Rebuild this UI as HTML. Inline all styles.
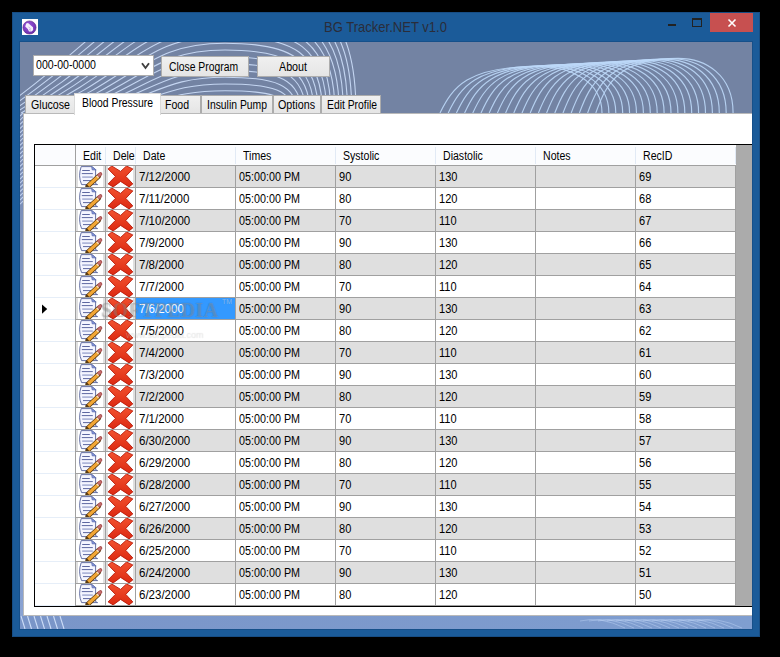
<!DOCTYPE html>
<html><head><meta charset="utf-8"><style>
html,body{margin:0;padding:0;}
body{width:780px;height:657px;background:#000;position:relative;overflow:hidden;font-family:"Liberation Sans",sans-serif;}
div{position:absolute;box-sizing:content-box;}
.t{white-space:nowrap;line-height:normal;}
</style></head><body>
<div style="left:12px;top:12px;width:746px;height:623px;background:#1b5b99;border:1px solid #174d84"></div>
<div style="left:22px;top:19px;width:16px;height:16px;background:#fff"></div>
<svg style="position:absolute;left:22px;top:19px" width="16" height="16" viewBox="0 0 16 16">
<defs><radialGradient id="ic" cx="0.4" cy="0.35" r="0.7"><stop offset="0" stop-color="#9a5ae0"/><stop offset="1" stop-color="#6a2aa8"/></radialGradient></defs>
<circle cx="7.5" cy="8.5" r="6.6" fill="url(#ic)" stroke="#5a2a8a" stroke-width="0.6"/>
<path d="M4.2 4.6 L6 4 L11 8.2 L11.2 11 L9.6 12.6 L7 12.4 L5.8 10 L3.2 7.4 Z" fill="#f4eefc"/>
<path d="M6.5 8 L8.5 9.5 M7 10.5 L9 11.2" stroke="#b090d8" stroke-width="0.7"/>
</svg>
<div class="t" style="left:324px;top:18px;font-size:15px;color:#2a2d3a;transform:scaleX(0.8695);transform-origin:0 0;">BG Tracker.NET v1.0</div>
<div style="left:668px;top:24px;width:8px;height:2px;background:#222"></div>
<div style="left:692px;top:18px;width:8px;height:6px;border:1px solid #222;border-top-width:2px"></div>
<div style="left:710px;top:13px;width:43px;height:19px;background:#c75050"></div>
<svg style="position:absolute;left:710px;top:13px" width="43" height="19" viewBox="0 0 43 19">
<path d="M18.5 6.5 L25.5 13.5 M25.5 6.5 L18.5 13.5" stroke="#fff" stroke-width="1.6" fill="none"/>
</svg>
<div style="left:19px;top:41px;width:734px;height:589px;background:#16508a"></div>
<div style="left:20px;top:42px;width:732px;height:587px;background:#7383a3"></div>
<svg style="position:absolute;left:20px;top:42px" width="732" height="587" viewBox="0 0 732 587">
<defs><linearGradient id="bs" x1="0" x2="1" y1="0" y2="0"><stop offset="0" stop-color="#7a95c8"/><stop offset="1" stop-color="#7f9ed0"/></linearGradient></defs>
<linearGradient id="ls" x1="0" x2="0" y1="0" y2="1"><stop offset="0" stop-color="#7686aa"/><stop offset="0.35" stop-color="#8298c6"/><stop offset="1" stop-color="#89a2d2"/></linearGradient>
<rect x="0" y="71" width="3" height="504" fill="url(#ls)"/>
<path d="M0 74.0 L3 71.0" stroke="#cfe0fb" stroke-width="1.1" stroke-opacity="0.8"/>
<path d="M0 78.2 L3 75.2" stroke="#cfe0fb" stroke-width="1.1" stroke-opacity="0.8"/>
<path d="M0 82.4 L3 79.4" stroke="#cfe0fb" stroke-width="1.1" stroke-opacity="0.8"/>
<path d="M0 86.6 L3 83.6" stroke="#cfe0fb" stroke-width="1.1" stroke-opacity="0.8"/>
<path d="M0 90.8 L3 87.8" stroke="#cfe0fb" stroke-width="1.1" stroke-opacity="0.8"/>
<path d="M0 95.0 L3 92.0" stroke="#cfe0fb" stroke-width="1.1" stroke-opacity="0.8"/>
<path d="M0 99.2 L3 96.2" stroke="#cfe0fb" stroke-width="1.1" stroke-opacity="0.8"/>
<path d="M0 103.4 L3 100.4" stroke="#cfe0fb" stroke-width="1.1" stroke-opacity="0.8"/>
<path d="M0 107.6 L3 104.6" stroke="#cfe0fb" stroke-width="1.1" stroke-opacity="0.8"/>
<path d="M0 111.8 L3 108.8" stroke="#cfe0fb" stroke-width="1.1" stroke-opacity="0.8"/>
<path d="M0 116.0 L3 113.0" stroke="#cfe0fb" stroke-width="1.1" stroke-opacity="0.8"/>
<path d="M0 120.2 L3 117.2" stroke="#cfe0fb" stroke-width="1.1" stroke-opacity="0.8"/>
<path d="M0 124.4 L3 121.4" stroke="#cfe0fb" stroke-width="1.1" stroke-opacity="0.8"/>
<path d="M0 128.6 L3 125.6" stroke="#cfe0fb" stroke-width="1.1" stroke-opacity="0.8"/>
<path d="M0 132.8 L3 129.8" stroke="#cfe0fb" stroke-width="1.1" stroke-opacity="0.8"/>
<path d="M0 137.0 L3 134.0" stroke="#cfe0fb" stroke-width="1.1" stroke-opacity="0.8"/>
<path d="M0 141.2 L3 138.2" stroke="#cfe0fb" stroke-width="1.1" stroke-opacity="0.8"/>
<path d="M0 145.4 L3 142.4" stroke="#cfe0fb" stroke-width="1.1" stroke-opacity="0.8"/>
<path d="M0 149.6 L3 146.6" stroke="#cfe0fb" stroke-width="1.1" stroke-opacity="0.8"/>
<path d="M0 153.8 L3 150.8" stroke="#cfe0fb" stroke-width="1.1" stroke-opacity="0.8"/>
<path d="M0 158.0 L3 155.0" stroke="#cfe0fb" stroke-width="1.1" stroke-opacity="0.8"/>
<path d="M0 162.2 L3 159.2" stroke="#cfe0fb" stroke-width="1.1" stroke-opacity="0.8"/>
<rect x="0" y="574" width="732" height="13" fill="url(#bs)"/>
<path d="M1.0 574 L5.0 587" stroke="#dbe9ff" stroke-width="1.1" stroke-opacity="0.85"/>
<path d="M7.5 574 L11.5 587" stroke="#dbe9ff" stroke-width="1.1" stroke-opacity="0.85"/>
<path d="M14.0 574 L18.0 587" stroke="#dbe9ff" stroke-width="1.1" stroke-opacity="0.85"/>
<path d="M20.5 574 L24.5 587" stroke="#dbe9ff" stroke-width="1.1" stroke-opacity="0.85"/>
<path d="M27.0 574 L31.0 587" stroke="#dbe9ff" stroke-width="1.1" stroke-opacity="0.85"/>
<path d="M33.5 574 L37.5 587" stroke="#dbe9ff" stroke-width="1.1" stroke-opacity="0.85"/>
<path d="M40.0 574 L44.0 587" stroke="#dbe9ff" stroke-width="1.1" stroke-opacity="0.85"/>
<path d="M560 579 Q580 574 605 586" fill="none" stroke="#c8dcfa" stroke-width="0.9" stroke-opacity="0.45"/>
<path d="M569 579 Q589 574 614 586" fill="none" stroke="#c8dcfa" stroke-width="0.9" stroke-opacity="0.45"/>
<path d="M578 579 Q598 574 623 586" fill="none" stroke="#c8dcfa" stroke-width="0.9" stroke-opacity="0.45"/>
<path d="M587 579 Q607 574 632 586" fill="none" stroke="#c8dcfa" stroke-width="0.9" stroke-opacity="0.45"/>
<path d="M596 579 Q616 574 641 586" fill="none" stroke="#c8dcfa" stroke-width="0.9" stroke-opacity="0.45"/>
<path d="M605 579 Q625 574 650 586" fill="none" stroke="#c8dcfa" stroke-width="0.9" stroke-opacity="0.45"/>
<path d="M614 579 Q634 574 659 586" fill="none" stroke="#c8dcfa" stroke-width="0.9" stroke-opacity="0.45"/>
<path d="M623 579 Q643 574 668 586" fill="none" stroke="#c8dcfa" stroke-width="0.9" stroke-opacity="0.45"/>
<path d="M632 579 Q652 574 677 586" fill="none" stroke="#c8dcfa" stroke-width="0.9" stroke-opacity="0.45"/>
<path d="M641 579 Q661 574 686 586" fill="none" stroke="#c8dcfa" stroke-width="0.9" stroke-opacity="0.45"/>
<path d="M650 579 Q670 574 695 586" fill="none" stroke="#c8dcfa" stroke-width="0.9" stroke-opacity="0.45"/>
<path d="M659 579 Q679 574 704 586" fill="none" stroke="#c8dcfa" stroke-width="0.9" stroke-opacity="0.45"/>
<path d="M668 579 Q688 574 713 586" fill="none" stroke="#c8dcfa" stroke-width="0.9" stroke-opacity="0.45"/>
<path d="M677 579 Q697 574 722 586" fill="none" stroke="#c8dcfa" stroke-width="0.9" stroke-opacity="0.45"/>
<path d="M-24.0 71.0 C90.5 -9.1 102.0 -60.0 205.0 -60.0 C296.7 -60.0 336.0 -31.2 336.0 71.0" fill="none" stroke="#d2e4ff" stroke-opacity="0.85" stroke-width="1.1"/>
<path d="M-17.7 71.0 C93.6 -3.5 104.8 -53.2 205.0 -53.2 C293.8 -53.2 331.8 -25.9 331.8 71.0" fill="none" stroke="#d2e4ff" stroke-opacity="0.85" stroke-width="1.1"/>
<path d="M-11.4 71.0 C96.8 2.6 107.6 -46.4 205.0 -46.4 C290.8 -46.4 327.6 -20.6 327.6 71.0" fill="none" stroke="#d2e4ff" stroke-opacity="0.85" stroke-width="1.1"/>
<path d="M-5.1 71.0 C99.9 8.4 110.5 -39.6 205.0 -39.6 C287.9 -39.6 323.4 -15.3 323.4 71.0" fill="none" stroke="#d2e4ff" stroke-opacity="0.85" stroke-width="1.1"/>
<path d="M1.2 71.0 C103.1 14.0 113.3 -32.8 205.0 -32.8 C284.9 -32.8 319.2 -10.0 319.2 71.0" fill="none" stroke="#d2e4ff" stroke-opacity="0.85" stroke-width="1.1"/>
<path d="M7.5 71.0 C106.2 19.4 116.1 -26.0 205.0 -26.0 C282.0 -26.0 315.0 -4.7 315.0 71.0" fill="none" stroke="#d2e4ff" stroke-opacity="0.85" stroke-width="1.1"/>
<path d="M13.8 71.0 C109.4 24.6 119.0 -19.2 205.0 -19.2 C279.1 -19.2 310.8 0.6 310.8 71.0" fill="none" stroke="#d2e4ff" stroke-opacity="0.85" stroke-width="1.1"/>
<path d="M20.1 71.0 C112.6 29.5 121.8 -12.4 205.0 -12.4 C276.1 -12.4 306.6 5.9 306.6 71.0" fill="none" stroke="#d2e4ff" stroke-opacity="0.85" stroke-width="1.1"/>
<path d="M26.4 71.0 C115.7 34.2 124.6 -5.6 205.0 -5.6 C273.2 -5.6 302.4 11.3 302.4 71.0" fill="none" stroke="#d2e4ff" stroke-opacity="0.85" stroke-width="1.1"/>
<path d="M32.7 71.0 C118.8 38.6 127.5 1.2 205.0 1.2 C270.2 1.2 298.2 16.6 298.2 71.0" fill="none" stroke="#d2e4ff" stroke-opacity="0.85" stroke-width="1.1"/>
<path d="M39.0 71.0 C122.0 42.8 130.3 8.0 205.0 8.0 C267.3 8.0 294.0 21.9 294.0 71.0" fill="none" stroke="#d2e4ff" stroke-opacity="0.85" stroke-width="1.1"/>
<path d="M45.3 71.0 C125.1 46.8 133.1 14.8 205.0 14.8 C264.4 14.8 289.8 27.2 289.8 71.0" fill="none" stroke="#d2e4ff" stroke-opacity="0.85" stroke-width="1.1"/>
<path d="M51.6 71.0 C128.3 50.6 136.0 21.6 205.0 21.6 C261.4 21.6 285.6 32.5 285.6 71.0" fill="none" stroke="#d2e4ff" stroke-opacity="0.85" stroke-width="1.1"/>
<path d="M57.9 71.0 C131.4 54.1 138.8 28.4 205.0 28.4 C258.5 28.4 281.4 37.8 281.4 71.0" fill="none" stroke="#d2e4ff" stroke-opacity="0.85" stroke-width="1.1"/>
<path d="M64.2 71.0 C134.6 57.4 141.6 35.2 205.0 35.2 C255.5 35.2 277.2 43.1 277.2 71.0" fill="none" stroke="#d2e4ff" stroke-opacity="0.85" stroke-width="1.1"/>
<path d="M70.5 71.0 C137.8 60.5 144.5 42.0 205.0 42.0 C252.6 42.0 273.0 48.4 273.0 71.0" fill="none" stroke="#d2e4ff" stroke-opacity="0.85" stroke-width="1.1"/>
<path d="M76.8 71.0 C140.9 63.3 147.3 48.8 205.0 48.8 C249.7 48.8 268.8 53.7 268.8 71.0" fill="none" stroke="#d2e4ff" stroke-opacity="0.85" stroke-width="1.1"/>
<path d="M83.1 71.0 C144.1 65.9 150.1 55.6 205.0 55.6 C246.7 55.6 264.6 59.0 264.6 71.0" fill="none" stroke="#d2e4ff" stroke-opacity="0.85" stroke-width="1.1"/>
<path d="M420.0 71.0 C432.6 45.3 447.2 24.4 517.2 24.4 C549.6 24.4 582.0 38.4 582.0 71.0" fill="none" stroke="#bcd8f8" stroke-opacity="0.9" stroke-width="1.15"/>
<path d="M428.2 71.0 C440.7 45.1 455.2 23.9 524.6 23.9 C556.8 23.9 588.9 38.1 588.9 71.0" fill="none" stroke="#bcd8f8" stroke-opacity="0.9" stroke-width="1.15"/>
<path d="M436.4 71.0 C448.8 44.9 463.2 23.5 532.0 23.5 C563.9 23.5 595.8 37.8 595.8 71.0" fill="none" stroke="#bcd8f8" stroke-opacity="0.9" stroke-width="1.15"/>
<path d="M444.6 71.0 C456.9 44.7 471.2 23.1 539.5 23.1 C571.1 23.1 602.7 37.5 602.7 71.0" fill="none" stroke="#bcd8f8" stroke-opacity="0.9" stroke-width="1.15"/>
<path d="M452.8 71.0 C465.0 44.4 479.1 22.7 546.9 22.7 C578.2 22.7 609.6 37.2 609.6 71.0" fill="none" stroke="#bcd8f8" stroke-opacity="0.9" stroke-width="1.15"/>
<path d="M461.0 71.0 C473.1 44.2 487.1 22.3 554.3 22.3 C585.4 22.3 616.5 36.9 616.5 71.0" fill="none" stroke="#bcd8f8" stroke-opacity="0.9" stroke-width="1.15"/>
<path d="M469.2 71.0 C481.2 44.0 495.1 21.8 561.7 21.8 C592.6 21.8 623.4 36.6 623.4 71.0" fill="none" stroke="#bcd8f8" stroke-opacity="0.9" stroke-width="1.15"/>
<path d="M477.4 71.0 C489.3 43.7 503.1 21.4 569.1 21.4 C599.7 21.4 630.3 36.3 630.3 71.0" fill="none" stroke="#bcd8f8" stroke-opacity="0.9" stroke-width="1.15"/>
<path d="M485.6 71.0 C497.4 43.5 511.1 21.0 576.6 21.0 C606.9 21.0 637.2 36.0 637.2 71.0" fill="none" stroke="#bcd8f8" stroke-opacity="0.9" stroke-width="1.15"/>
<path d="M493.8 71.0 C505.5 43.3 519.1 20.6 584.0 20.6 C614.0 20.6 644.1 35.7 644.1 71.0" fill="none" stroke="#bcd8f8" stroke-opacity="0.9" stroke-width="1.15"/>
<path d="M502.0 71.0 C513.6 43.0 527.0 20.2 591.4 20.2 C621.2 20.2 651.0 35.4 651.0 71.0" fill="none" stroke="#bcd8f8" stroke-opacity="0.9" stroke-width="1.15"/>
<path d="M510.2 71.0 C521.7 42.8 535.0 19.7 598.8 19.7 C628.4 19.7 657.9 35.1 657.9 71.0" fill="none" stroke="#bcd8f8" stroke-opacity="0.9" stroke-width="1.15"/>
<path d="M518.4 71.0 C529.8 42.6 543.0 19.3 606.2 19.3 C635.5 19.3 664.8 34.8 664.8 71.0" fill="none" stroke="#bcd8f8" stroke-opacity="0.9" stroke-width="1.15"/>
<path d="M526.6 71.0 C537.9 42.3 551.0 18.9 613.7 18.9 C642.7 18.9 671.7 34.5 671.7 71.0" fill="none" stroke="#bcd8f8" stroke-opacity="0.9" stroke-width="1.15"/>
<path d="M534.8 71.0 C546.0 42.1 559.0 18.5 621.1 18.5 C649.8 18.5 678.6 34.2 678.6 71.0" fill="none" stroke="#bcd8f8" stroke-opacity="0.9" stroke-width="1.15"/>
<path d="M543.0 71.0 C554.1 41.9 566.9 18.0 628.5 18.0 C657.0 18.0 685.5 33.9 685.5 71.0" fill="none" stroke="#bcd8f8" stroke-opacity="0.9" stroke-width="1.15"/>
<path d="M551.2 71.0 C562.2 41.6 574.9 17.6 635.9 17.6 C664.2 17.6 692.4 33.6 692.4 71.0" fill="none" stroke="#bcd8f8" stroke-opacity="0.9" stroke-width="1.15"/>
<path d="M559.4 71.0 C570.3 41.4 582.9 17.2 643.3 17.2 C671.3 17.2 699.3 33.3 699.3 71.0" fill="none" stroke="#bcd8f8" stroke-opacity="0.9" stroke-width="1.15"/>
<path d="M567.6 71.0 C578.4 41.2 590.9 16.8 650.8 16.8 C678.5 16.8 706.2 33.1 706.2 71.0" fill="none" stroke="#bcd8f8" stroke-opacity="0.9" stroke-width="1.15"/>
<path d="M575.8 71.0 C586.5 41.0 598.9 16.4 658.2 16.4 C685.6 16.4 713.1 32.8 713.1 71.0" fill="none" stroke="#bcd8f8" stroke-opacity="0.9" stroke-width="1.15"/>
</svg>
<div style="left:33px;top:55px;width:119px;height:19px;background:#fff;border:1px solid #adadad"></div>
<div class="t" style="left:36px;top:58px;font-size:12px;color:#000;transform:scaleX(0.8817);transform-origin:0 0;">000-00-0000</div>
<svg style="position:absolute;left:141px;top:62px" width="9" height="8" viewBox="0 0 9 8">
<path d="M1 1.2 L4.5 6 L8 1.2" stroke="#404040" stroke-width="1.9" fill="none"/></svg>
<div style="left:161px;top:56px;width:86px;height:19px;border:1px solid #adadad;background:linear-gradient(#f0f0f0,#e5e5e5)"></div>
<div class="t" style="left:169px;top:60px;font-size:12px;color:#000;transform:scaleX(0.8622);transform-origin:0 0;">Close Program</div>
<div style="left:257px;top:56px;width:71px;height:19px;border:1px solid #adadad;background:linear-gradient(#f0f0f0,#e5e5e5)"></div>
<div class="t" style="left:279px;top:60px;font-size:12px;color:#000;transform:scaleX(0.8933);transform-origin:0 0;">About</div>
<div style="left:23px;top:113px;width:728px;height:501px;background:#fff;border-left:1px solid #b9b9b9;border-top:1px solid #b9b9b9;border-bottom:1px solid #b9b9b9"></div>
<div style="left:25px;top:95px;width:49px;height:17px;border:1px solid #acacac;border-bottom:none;background:linear-gradient(#f0f0f0,#e5e5e5)"></div>
<div class="t" style="left:31px;top:98px;font-size:12px;color:#000;transform:scaleX(0.8860);transform-origin:0 0;">Glucose</div>
<div style="left:160px;top:95px;width:39px;height:17px;border:1px solid #acacac;border-bottom:none;background:linear-gradient(#f0f0f0,#e5e5e5)"></div>
<div class="t" style="left:165px;top:98px;font-size:12px;color:#000;transform:scaleX(0.8777);transform-origin:0 0;">Food</div>
<div style="left:201px;top:95px;width:70px;height:17px;border:1px solid #acacac;border-bottom:none;background:linear-gradient(#f0f0f0,#e5e5e5)"></div>
<div class="t" style="left:207px;top:98px;font-size:12px;color:#000;transform:scaleX(0.8651);transform-origin:0 0;">Insulin Pump</div>
<div style="left:273px;top:95px;width:46px;height:17px;border:1px solid #acacac;border-bottom:none;background:linear-gradient(#f0f0f0,#e5e5e5)"></div>
<div class="t" style="left:278px;top:98px;font-size:12px;color:#000;transform:scaleX(0.8949);transform-origin:0 0;">Options</div>
<div style="left:321px;top:95px;width:58px;height:17px;border:1px solid #acacac;border-bottom:none;background:linear-gradient(#f0f0f0,#e5e5e5)"></div>
<div class="t" style="left:327px;top:98px;font-size:12px;color:#000;transform:scaleX(0.8618);transform-origin:0 0;">Edit Profile</div>
<div style="left:74px;top:93px;width:85px;height:21px;background:#fff;border:1px solid #d9d9d9;border-bottom:none"></div>
<div class="t" style="left:82px;top:96px;font-size:12px;color:#000;transform:scaleX(0.8655);transform-origin:0 0;">Blood Pressure</div>
<div style="left:0;top:0;width:752px;height:657px;overflow:hidden">
<div style="left:34px;top:144px;width:720px;height:463px;background:#000"></div>
<div style="left:35px;top:145px;width:718px;height:461px;background:#fff"></div>
<div style="left:35px;top:145px;width:700px;height:20px;background:#fbfcfe"></div>
<div style="left:105px;top:147px;width:1px;height:17px;background:#e2eaf5"></div>
<div class="t" style="left:83px;top:149px;font-size:12px;color:#000;transform:scaleX(0.8800);transform-origin:0 0;">Edit</div>
<div style="left:135px;top:147px;width:1px;height:17px;background:#e2eaf5"></div>
<div class="t" style="left:113px;top:149px;font-size:12px;color:#000;transform:scaleX(0.8800);transform-origin:0 0;">Dele</div>
<div style="left:235px;top:147px;width:1px;height:17px;background:#e2eaf5"></div>
<div class="t" style="left:143px;top:149px;font-size:12px;color:#000;transform:scaleX(0.8800);transform-origin:0 0;">Date</div>
<div style="left:335px;top:147px;width:1px;height:17px;background:#e2eaf5"></div>
<div class="t" style="left:243px;top:149px;font-size:12px;color:#000;transform:scaleX(0.8800);transform-origin:0 0;">Times</div>
<div style="left:435px;top:147px;width:1px;height:17px;background:#e2eaf5"></div>
<div class="t" style="left:343px;top:149px;font-size:12px;color:#000;transform:scaleX(0.8800);transform-origin:0 0;">Systolic</div>
<div style="left:535px;top:147px;width:1px;height:17px;background:#e2eaf5"></div>
<div class="t" style="left:443px;top:149px;font-size:12px;color:#000;transform:scaleX(0.8800);transform-origin:0 0;">Diastolic</div>
<div style="left:635px;top:147px;width:1px;height:17px;background:#e2eaf5"></div>
<div class="t" style="left:543px;top:149px;font-size:12px;color:#000;transform:scaleX(0.8800);transform-origin:0 0;">Notes</div>
<div style="left:735px;top:147px;width:1px;height:17px;background:#e2eaf5"></div>
<div class="t" style="left:643px;top:149px;font-size:12px;color:#000;transform:scaleX(0.8800);transform-origin:0 0;">RecID</div>
<div style="left:35px;top:165px;width:700px;height:1px;background:#a0a0a0"></div>
<div style="left:736px;top:145px;width:17px;height:461px;background:#ababab"></div>
<div style="left:76px;top:166px;width:659px;height:21px;background:#dfdfdf"></div>
<div style="left:35px;top:187px;width:40px;height:1px;background:#e6eef8"></div>
<div style="left:76px;top:187px;width:660px;height:1px;background:#a0a0a0"></div>
<svg style="position:absolute;left:76px;top:166px" width="29" height="21" viewBox="0 0 29 21"><rect x="2" width="25" height="21" fill="#fff"/><path d="M5.2 0.6 L16 0.6 L19.6 3.6 L19.6 17.6 L21.6 18.6 L5.6 18.6 Q1.8 10 5.2 0.6 Z" fill="#f4f5ff" stroke="#56629a" stroke-width="0.9"/><path d="M15.6 0.6 L20.2 3.9 L16.2 3.9 Z" fill="#8598e6" stroke="#5f6da6" stroke-width="0.7"/><path d="M6.2 4.5 H13.8 M5.8 7.6 H16.8 M7 14.6 H15" stroke="#5d67a0" stroke-width="1"/><path d="M6.2 11.1 H16.8" stroke="#a2abd2" stroke-width="1.5"/><path d="M11.8 20.2 L22.6 10.2" stroke="#5a3a10" stroke-width="4.8" stroke-linecap="round"/><path d="M12.2 19.8 L22 10.8" stroke="#f2a634" stroke-width="3.2"/><path d="M23 9.3 L24.4 8.1" stroke="#a85050" stroke-width="3.8" stroke-linecap="round"/><path d="M23.1 9.2 L24.3 8.2" stroke="#c87070" stroke-width="2.2" stroke-linecap="round"/><path d="M21.2 11.4 L22.2 10.4" stroke="#f4e0c0" stroke-width="2.6"/></svg>
<svg style="position:absolute;left:106px;top:166px" width="29" height="21" viewBox="0 0 29 21"><defs><linearGradient id="xg{k}" x1="0" y1="0" x2="0" y2="1"><stop offset="0" stop-color="#f2502e"/><stop offset="1" stop-color="#dc2a12"/></linearGradient></defs><rect x="2" width="25" height="21" fill="#fff"/><path d="M2.1 2.9 L5.8 0 L14.6 5.4 L20.5 0 L26.8 2.9 L19.8 10.4 L26.8 17.9 L23 20.9 L14.6 15.4 L7.2 20.9 L2.1 17.9 L9.4 10.4 Z" fill="url(#xg{k})" stroke="#b81808" stroke-width="0.9" stroke-linejoin="miter"/></svg>
<div class="t" style="left:139px;top:170px;font-size:12px;color:#000;transform:scaleX(0.9600);transform-origin:0 0;">7/12/2000</div>
<div class="t" style="left:239px;top:170px;font-size:12px;color:#000;transform:scaleX(0.8969);transform-origin:0 0;">05:00:00 PM</div>
<div class="t" style="left:339px;top:170px;font-size:12px;color:#000;transform:scaleX(0.9200);transform-origin:0 0;">90</div>
<div class="t" style="left:439px;top:170px;font-size:12px;color:#000;transform:scaleX(0.9200);transform-origin:0 0;">130</div>
<div class="t" style="left:639px;top:170px;font-size:12px;color:#000;transform:scaleX(0.9200);transform-origin:0 0;">69</div>
<div style="left:35px;top:209px;width:40px;height:1px;background:#e6eef8"></div>
<div style="left:76px;top:209px;width:660px;height:1px;background:#a0a0a0"></div>
<svg style="position:absolute;left:76px;top:188px" width="29" height="21" viewBox="0 0 29 21"><rect x="2" width="25" height="21" fill="#fff"/><path d="M5.2 0.6 L16 0.6 L19.6 3.6 L19.6 17.6 L21.6 18.6 L5.6 18.6 Q1.8 10 5.2 0.6 Z" fill="#f4f5ff" stroke="#56629a" stroke-width="0.9"/><path d="M15.6 0.6 L20.2 3.9 L16.2 3.9 Z" fill="#8598e6" stroke="#5f6da6" stroke-width="0.7"/><path d="M6.2 4.5 H13.8 M5.8 7.6 H16.8 M7 14.6 H15" stroke="#5d67a0" stroke-width="1"/><path d="M6.2 11.1 H16.8" stroke="#a2abd2" stroke-width="1.5"/><path d="M11.8 20.2 L22.6 10.2" stroke="#5a3a10" stroke-width="4.8" stroke-linecap="round"/><path d="M12.2 19.8 L22 10.8" stroke="#f2a634" stroke-width="3.2"/><path d="M23 9.3 L24.4 8.1" stroke="#a85050" stroke-width="3.8" stroke-linecap="round"/><path d="M23.1 9.2 L24.3 8.2" stroke="#c87070" stroke-width="2.2" stroke-linecap="round"/><path d="M21.2 11.4 L22.2 10.4" stroke="#f4e0c0" stroke-width="2.6"/></svg>
<svg style="position:absolute;left:106px;top:188px" width="29" height="21" viewBox="0 0 29 21"><defs><linearGradient id="xg{k}" x1="0" y1="0" x2="0" y2="1"><stop offset="0" stop-color="#f2502e"/><stop offset="1" stop-color="#dc2a12"/></linearGradient></defs><rect x="2" width="25" height="21" fill="#fff"/><path d="M2.1 2.9 L5.8 0 L14.6 5.4 L20.5 0 L26.8 2.9 L19.8 10.4 L26.8 17.9 L23 20.9 L14.6 15.4 L7.2 20.9 L2.1 17.9 L9.4 10.4 Z" fill="url(#xg{k})" stroke="#b81808" stroke-width="0.9" stroke-linejoin="miter"/></svg>
<div class="t" style="left:139px;top:192px;font-size:12px;color:#000;transform:scaleX(0.9600);transform-origin:0 0;">7/11/2000</div>
<div class="t" style="left:239px;top:192px;font-size:12px;color:#000;transform:scaleX(0.8969);transform-origin:0 0;">05:00:00 PM</div>
<div class="t" style="left:339px;top:192px;font-size:12px;color:#000;transform:scaleX(0.9200);transform-origin:0 0;">80</div>
<div class="t" style="left:439px;top:192px;font-size:12px;color:#000;transform:scaleX(0.9200);transform-origin:0 0;">120</div>
<div class="t" style="left:639px;top:192px;font-size:12px;color:#000;transform:scaleX(0.9200);transform-origin:0 0;">68</div>
<div style="left:76px;top:210px;width:659px;height:21px;background:#dfdfdf"></div>
<div style="left:35px;top:231px;width:40px;height:1px;background:#e6eef8"></div>
<div style="left:76px;top:231px;width:660px;height:1px;background:#a0a0a0"></div>
<svg style="position:absolute;left:76px;top:210px" width="29" height="21" viewBox="0 0 29 21"><rect x="2" width="25" height="21" fill="#fff"/><path d="M5.2 0.6 L16 0.6 L19.6 3.6 L19.6 17.6 L21.6 18.6 L5.6 18.6 Q1.8 10 5.2 0.6 Z" fill="#f4f5ff" stroke="#56629a" stroke-width="0.9"/><path d="M15.6 0.6 L20.2 3.9 L16.2 3.9 Z" fill="#8598e6" stroke="#5f6da6" stroke-width="0.7"/><path d="M6.2 4.5 H13.8 M5.8 7.6 H16.8 M7 14.6 H15" stroke="#5d67a0" stroke-width="1"/><path d="M6.2 11.1 H16.8" stroke="#a2abd2" stroke-width="1.5"/><path d="M11.8 20.2 L22.6 10.2" stroke="#5a3a10" stroke-width="4.8" stroke-linecap="round"/><path d="M12.2 19.8 L22 10.8" stroke="#f2a634" stroke-width="3.2"/><path d="M23 9.3 L24.4 8.1" stroke="#a85050" stroke-width="3.8" stroke-linecap="round"/><path d="M23.1 9.2 L24.3 8.2" stroke="#c87070" stroke-width="2.2" stroke-linecap="round"/><path d="M21.2 11.4 L22.2 10.4" stroke="#f4e0c0" stroke-width="2.6"/></svg>
<svg style="position:absolute;left:106px;top:210px" width="29" height="21" viewBox="0 0 29 21"><defs><linearGradient id="xg{k}" x1="0" y1="0" x2="0" y2="1"><stop offset="0" stop-color="#f2502e"/><stop offset="1" stop-color="#dc2a12"/></linearGradient></defs><rect x="2" width="25" height="21" fill="#fff"/><path d="M2.1 2.9 L5.8 0 L14.6 5.4 L20.5 0 L26.8 2.9 L19.8 10.4 L26.8 17.9 L23 20.9 L14.6 15.4 L7.2 20.9 L2.1 17.9 L9.4 10.4 Z" fill="url(#xg{k})" stroke="#b81808" stroke-width="0.9" stroke-linejoin="miter"/></svg>
<div class="t" style="left:139px;top:214px;font-size:12px;color:#000;transform:scaleX(0.9600);transform-origin:0 0;">7/10/2000</div>
<div class="t" style="left:239px;top:214px;font-size:12px;color:#000;transform:scaleX(0.8969);transform-origin:0 0;">05:00:00 PM</div>
<div class="t" style="left:339px;top:214px;font-size:12px;color:#000;transform:scaleX(0.9200);transform-origin:0 0;">70</div>
<div class="t" style="left:439px;top:214px;font-size:12px;color:#000;transform:scaleX(0.9200);transform-origin:0 0;">110</div>
<div class="t" style="left:639px;top:214px;font-size:12px;color:#000;transform:scaleX(0.9200);transform-origin:0 0;">67</div>
<div style="left:35px;top:253px;width:40px;height:1px;background:#e6eef8"></div>
<div style="left:76px;top:253px;width:660px;height:1px;background:#a0a0a0"></div>
<svg style="position:absolute;left:76px;top:232px" width="29" height="21" viewBox="0 0 29 21"><rect x="2" width="25" height="21" fill="#fff"/><path d="M5.2 0.6 L16 0.6 L19.6 3.6 L19.6 17.6 L21.6 18.6 L5.6 18.6 Q1.8 10 5.2 0.6 Z" fill="#f4f5ff" stroke="#56629a" stroke-width="0.9"/><path d="M15.6 0.6 L20.2 3.9 L16.2 3.9 Z" fill="#8598e6" stroke="#5f6da6" stroke-width="0.7"/><path d="M6.2 4.5 H13.8 M5.8 7.6 H16.8 M7 14.6 H15" stroke="#5d67a0" stroke-width="1"/><path d="M6.2 11.1 H16.8" stroke="#a2abd2" stroke-width="1.5"/><path d="M11.8 20.2 L22.6 10.2" stroke="#5a3a10" stroke-width="4.8" stroke-linecap="round"/><path d="M12.2 19.8 L22 10.8" stroke="#f2a634" stroke-width="3.2"/><path d="M23 9.3 L24.4 8.1" stroke="#a85050" stroke-width="3.8" stroke-linecap="round"/><path d="M23.1 9.2 L24.3 8.2" stroke="#c87070" stroke-width="2.2" stroke-linecap="round"/><path d="M21.2 11.4 L22.2 10.4" stroke="#f4e0c0" stroke-width="2.6"/></svg>
<svg style="position:absolute;left:106px;top:232px" width="29" height="21" viewBox="0 0 29 21"><defs><linearGradient id="xg{k}" x1="0" y1="0" x2="0" y2="1"><stop offset="0" stop-color="#f2502e"/><stop offset="1" stop-color="#dc2a12"/></linearGradient></defs><rect x="2" width="25" height="21" fill="#fff"/><path d="M2.1 2.9 L5.8 0 L14.6 5.4 L20.5 0 L26.8 2.9 L19.8 10.4 L26.8 17.9 L23 20.9 L14.6 15.4 L7.2 20.9 L2.1 17.9 L9.4 10.4 Z" fill="url(#xg{k})" stroke="#b81808" stroke-width="0.9" stroke-linejoin="miter"/></svg>
<div class="t" style="left:139px;top:236px;font-size:12px;color:#000;transform:scaleX(0.9600);transform-origin:0 0;">7/9/2000</div>
<div class="t" style="left:239px;top:236px;font-size:12px;color:#000;transform:scaleX(0.8969);transform-origin:0 0;">05:00:00 PM</div>
<div class="t" style="left:339px;top:236px;font-size:12px;color:#000;transform:scaleX(0.9200);transform-origin:0 0;">90</div>
<div class="t" style="left:439px;top:236px;font-size:12px;color:#000;transform:scaleX(0.9200);transform-origin:0 0;">130</div>
<div class="t" style="left:639px;top:236px;font-size:12px;color:#000;transform:scaleX(0.9200);transform-origin:0 0;">66</div>
<div style="left:76px;top:254px;width:659px;height:21px;background:#dfdfdf"></div>
<div style="left:35px;top:275px;width:40px;height:1px;background:#e6eef8"></div>
<div style="left:76px;top:275px;width:660px;height:1px;background:#a0a0a0"></div>
<svg style="position:absolute;left:76px;top:254px" width="29" height="21" viewBox="0 0 29 21"><rect x="2" width="25" height="21" fill="#fff"/><path d="M5.2 0.6 L16 0.6 L19.6 3.6 L19.6 17.6 L21.6 18.6 L5.6 18.6 Q1.8 10 5.2 0.6 Z" fill="#f4f5ff" stroke="#56629a" stroke-width="0.9"/><path d="M15.6 0.6 L20.2 3.9 L16.2 3.9 Z" fill="#8598e6" stroke="#5f6da6" stroke-width="0.7"/><path d="M6.2 4.5 H13.8 M5.8 7.6 H16.8 M7 14.6 H15" stroke="#5d67a0" stroke-width="1"/><path d="M6.2 11.1 H16.8" stroke="#a2abd2" stroke-width="1.5"/><path d="M11.8 20.2 L22.6 10.2" stroke="#5a3a10" stroke-width="4.8" stroke-linecap="round"/><path d="M12.2 19.8 L22 10.8" stroke="#f2a634" stroke-width="3.2"/><path d="M23 9.3 L24.4 8.1" stroke="#a85050" stroke-width="3.8" stroke-linecap="round"/><path d="M23.1 9.2 L24.3 8.2" stroke="#c87070" stroke-width="2.2" stroke-linecap="round"/><path d="M21.2 11.4 L22.2 10.4" stroke="#f4e0c0" stroke-width="2.6"/></svg>
<svg style="position:absolute;left:106px;top:254px" width="29" height="21" viewBox="0 0 29 21"><defs><linearGradient id="xg{k}" x1="0" y1="0" x2="0" y2="1"><stop offset="0" stop-color="#f2502e"/><stop offset="1" stop-color="#dc2a12"/></linearGradient></defs><rect x="2" width="25" height="21" fill="#fff"/><path d="M2.1 2.9 L5.8 0 L14.6 5.4 L20.5 0 L26.8 2.9 L19.8 10.4 L26.8 17.9 L23 20.9 L14.6 15.4 L7.2 20.9 L2.1 17.9 L9.4 10.4 Z" fill="url(#xg{k})" stroke="#b81808" stroke-width="0.9" stroke-linejoin="miter"/></svg>
<div class="t" style="left:139px;top:258px;font-size:12px;color:#000;transform:scaleX(0.9600);transform-origin:0 0;">7/8/2000</div>
<div class="t" style="left:239px;top:258px;font-size:12px;color:#000;transform:scaleX(0.8969);transform-origin:0 0;">05:00:00 PM</div>
<div class="t" style="left:339px;top:258px;font-size:12px;color:#000;transform:scaleX(0.9200);transform-origin:0 0;">80</div>
<div class="t" style="left:439px;top:258px;font-size:12px;color:#000;transform:scaleX(0.9200);transform-origin:0 0;">120</div>
<div class="t" style="left:639px;top:258px;font-size:12px;color:#000;transform:scaleX(0.9200);transform-origin:0 0;">65</div>
<div style="left:35px;top:297px;width:40px;height:1px;background:#e6eef8"></div>
<div style="left:76px;top:297px;width:660px;height:1px;background:#a0a0a0"></div>
<svg style="position:absolute;left:76px;top:276px" width="29" height="21" viewBox="0 0 29 21"><rect x="2" width="25" height="21" fill="#fff"/><path d="M5.2 0.6 L16 0.6 L19.6 3.6 L19.6 17.6 L21.6 18.6 L5.6 18.6 Q1.8 10 5.2 0.6 Z" fill="#f4f5ff" stroke="#56629a" stroke-width="0.9"/><path d="M15.6 0.6 L20.2 3.9 L16.2 3.9 Z" fill="#8598e6" stroke="#5f6da6" stroke-width="0.7"/><path d="M6.2 4.5 H13.8 M5.8 7.6 H16.8 M7 14.6 H15" stroke="#5d67a0" stroke-width="1"/><path d="M6.2 11.1 H16.8" stroke="#a2abd2" stroke-width="1.5"/><path d="M11.8 20.2 L22.6 10.2" stroke="#5a3a10" stroke-width="4.8" stroke-linecap="round"/><path d="M12.2 19.8 L22 10.8" stroke="#f2a634" stroke-width="3.2"/><path d="M23 9.3 L24.4 8.1" stroke="#a85050" stroke-width="3.8" stroke-linecap="round"/><path d="M23.1 9.2 L24.3 8.2" stroke="#c87070" stroke-width="2.2" stroke-linecap="round"/><path d="M21.2 11.4 L22.2 10.4" stroke="#f4e0c0" stroke-width="2.6"/></svg>
<svg style="position:absolute;left:106px;top:276px" width="29" height="21" viewBox="0 0 29 21"><defs><linearGradient id="xg{k}" x1="0" y1="0" x2="0" y2="1"><stop offset="0" stop-color="#f2502e"/><stop offset="1" stop-color="#dc2a12"/></linearGradient></defs><rect x="2" width="25" height="21" fill="#fff"/><path d="M2.1 2.9 L5.8 0 L14.6 5.4 L20.5 0 L26.8 2.9 L19.8 10.4 L26.8 17.9 L23 20.9 L14.6 15.4 L7.2 20.9 L2.1 17.9 L9.4 10.4 Z" fill="url(#xg{k})" stroke="#b81808" stroke-width="0.9" stroke-linejoin="miter"/></svg>
<div class="t" style="left:139px;top:280px;font-size:12px;color:#000;transform:scaleX(0.9600);transform-origin:0 0;">7/7/2000</div>
<div class="t" style="left:239px;top:280px;font-size:12px;color:#000;transform:scaleX(0.8969);transform-origin:0 0;">05:00:00 PM</div>
<div class="t" style="left:339px;top:280px;font-size:12px;color:#000;transform:scaleX(0.9200);transform-origin:0 0;">70</div>
<div class="t" style="left:439px;top:280px;font-size:12px;color:#000;transform:scaleX(0.9200);transform-origin:0 0;">110</div>
<div class="t" style="left:639px;top:280px;font-size:12px;color:#000;transform:scaleX(0.9200);transform-origin:0 0;">64</div>
<div style="left:76px;top:298px;width:659px;height:21px;background:#dfdfdf"></div>
<div style="left:35px;top:319px;width:40px;height:1px;background:#e6eef8"></div>
<div style="left:76px;top:319px;width:660px;height:1px;background:#a0a0a0"></div>
<svg style="position:absolute;left:76px;top:298px" width="29" height="21" viewBox="0 0 29 21"><rect x="2" width="25" height="21" fill="#fff"/><path d="M5.2 0.6 L16 0.6 L19.6 3.6 L19.6 17.6 L21.6 18.6 L5.6 18.6 Q1.8 10 5.2 0.6 Z" fill="#f4f5ff" stroke="#56629a" stroke-width="0.9"/><path d="M15.6 0.6 L20.2 3.9 L16.2 3.9 Z" fill="#8598e6" stroke="#5f6da6" stroke-width="0.7"/><path d="M6.2 4.5 H13.8 M5.8 7.6 H16.8 M7 14.6 H15" stroke="#5d67a0" stroke-width="1"/><path d="M6.2 11.1 H16.8" stroke="#a2abd2" stroke-width="1.5"/><path d="M11.8 20.2 L22.6 10.2" stroke="#5a3a10" stroke-width="4.8" stroke-linecap="round"/><path d="M12.2 19.8 L22 10.8" stroke="#f2a634" stroke-width="3.2"/><path d="M23 9.3 L24.4 8.1" stroke="#a85050" stroke-width="3.8" stroke-linecap="round"/><path d="M23.1 9.2 L24.3 8.2" stroke="#c87070" stroke-width="2.2" stroke-linecap="round"/><path d="M21.2 11.4 L22.2 10.4" stroke="#f4e0c0" stroke-width="2.6"/></svg>
<svg style="position:absolute;left:106px;top:298px" width="29" height="21" viewBox="0 0 29 21"><defs><linearGradient id="xg{k}" x1="0" y1="0" x2="0" y2="1"><stop offset="0" stop-color="#f2502e"/><stop offset="1" stop-color="#dc2a12"/></linearGradient></defs><rect x="2" width="25" height="21" fill="#fff"/><path d="M2.1 2.9 L5.8 0 L14.6 5.4 L20.5 0 L26.8 2.9 L19.8 10.4 L26.8 17.9 L23 20.9 L14.6 15.4 L7.2 20.9 L2.1 17.9 L9.4 10.4 Z" fill="url(#xg{k})" stroke="#b81808" stroke-width="0.9" stroke-linejoin="miter"/></svg>
<div style="left:136px;top:298px;width:99px;height:21px;background:#3399ff"></div>
<div class="t" style="left:139px;top:302px;font-size:12px;color:#fff;transform:scaleX(0.9600);transform-origin:0 0;">7/6/2000</div>
<div class="t" style="left:239px;top:302px;font-size:12px;color:#000;transform:scaleX(0.8969);transform-origin:0 0;">05:00:00 PM</div>
<div class="t" style="left:339px;top:302px;font-size:12px;color:#000;transform:scaleX(0.9200);transform-origin:0 0;">90</div>
<div class="t" style="left:439px;top:302px;font-size:12px;color:#000;transform:scaleX(0.9200);transform-origin:0 0;">130</div>
<div class="t" style="left:639px;top:302px;font-size:12px;color:#000;transform:scaleX(0.9200);transform-origin:0 0;">63</div>
<div style="left:35px;top:341px;width:40px;height:1px;background:#e6eef8"></div>
<div style="left:76px;top:341px;width:660px;height:1px;background:#a0a0a0"></div>
<svg style="position:absolute;left:76px;top:320px" width="29" height="21" viewBox="0 0 29 21"><rect x="2" width="25" height="21" fill="#fff"/><path d="M5.2 0.6 L16 0.6 L19.6 3.6 L19.6 17.6 L21.6 18.6 L5.6 18.6 Q1.8 10 5.2 0.6 Z" fill="#f4f5ff" stroke="#56629a" stroke-width="0.9"/><path d="M15.6 0.6 L20.2 3.9 L16.2 3.9 Z" fill="#8598e6" stroke="#5f6da6" stroke-width="0.7"/><path d="M6.2 4.5 H13.8 M5.8 7.6 H16.8 M7 14.6 H15" stroke="#5d67a0" stroke-width="1"/><path d="M6.2 11.1 H16.8" stroke="#a2abd2" stroke-width="1.5"/><path d="M11.8 20.2 L22.6 10.2" stroke="#5a3a10" stroke-width="4.8" stroke-linecap="round"/><path d="M12.2 19.8 L22 10.8" stroke="#f2a634" stroke-width="3.2"/><path d="M23 9.3 L24.4 8.1" stroke="#a85050" stroke-width="3.8" stroke-linecap="round"/><path d="M23.1 9.2 L24.3 8.2" stroke="#c87070" stroke-width="2.2" stroke-linecap="round"/><path d="M21.2 11.4 L22.2 10.4" stroke="#f4e0c0" stroke-width="2.6"/></svg>
<svg style="position:absolute;left:106px;top:320px" width="29" height="21" viewBox="0 0 29 21"><defs><linearGradient id="xg{k}" x1="0" y1="0" x2="0" y2="1"><stop offset="0" stop-color="#f2502e"/><stop offset="1" stop-color="#dc2a12"/></linearGradient></defs><rect x="2" width="25" height="21" fill="#fff"/><path d="M2.1 2.9 L5.8 0 L14.6 5.4 L20.5 0 L26.8 2.9 L19.8 10.4 L26.8 17.9 L23 20.9 L14.6 15.4 L7.2 20.9 L2.1 17.9 L9.4 10.4 Z" fill="url(#xg{k})" stroke="#b81808" stroke-width="0.9" stroke-linejoin="miter"/></svg>
<div class="t" style="left:139px;top:324px;font-size:12px;color:#000;transform:scaleX(0.9600);transform-origin:0 0;">7/5/2000</div>
<div class="t" style="left:239px;top:324px;font-size:12px;color:#000;transform:scaleX(0.8969);transform-origin:0 0;">05:00:00 PM</div>
<div class="t" style="left:339px;top:324px;font-size:12px;color:#000;transform:scaleX(0.9200);transform-origin:0 0;">80</div>
<div class="t" style="left:439px;top:324px;font-size:12px;color:#000;transform:scaleX(0.9200);transform-origin:0 0;">120</div>
<div class="t" style="left:639px;top:324px;font-size:12px;color:#000;transform:scaleX(0.9200);transform-origin:0 0;">62</div>
<div style="left:76px;top:342px;width:659px;height:21px;background:#dfdfdf"></div>
<div style="left:35px;top:363px;width:40px;height:1px;background:#e6eef8"></div>
<div style="left:76px;top:363px;width:660px;height:1px;background:#a0a0a0"></div>
<svg style="position:absolute;left:76px;top:342px" width="29" height="21" viewBox="0 0 29 21"><rect x="2" width="25" height="21" fill="#fff"/><path d="M5.2 0.6 L16 0.6 L19.6 3.6 L19.6 17.6 L21.6 18.6 L5.6 18.6 Q1.8 10 5.2 0.6 Z" fill="#f4f5ff" stroke="#56629a" stroke-width="0.9"/><path d="M15.6 0.6 L20.2 3.9 L16.2 3.9 Z" fill="#8598e6" stroke="#5f6da6" stroke-width="0.7"/><path d="M6.2 4.5 H13.8 M5.8 7.6 H16.8 M7 14.6 H15" stroke="#5d67a0" stroke-width="1"/><path d="M6.2 11.1 H16.8" stroke="#a2abd2" stroke-width="1.5"/><path d="M11.8 20.2 L22.6 10.2" stroke="#5a3a10" stroke-width="4.8" stroke-linecap="round"/><path d="M12.2 19.8 L22 10.8" stroke="#f2a634" stroke-width="3.2"/><path d="M23 9.3 L24.4 8.1" stroke="#a85050" stroke-width="3.8" stroke-linecap="round"/><path d="M23.1 9.2 L24.3 8.2" stroke="#c87070" stroke-width="2.2" stroke-linecap="round"/><path d="M21.2 11.4 L22.2 10.4" stroke="#f4e0c0" stroke-width="2.6"/></svg>
<svg style="position:absolute;left:106px;top:342px" width="29" height="21" viewBox="0 0 29 21"><defs><linearGradient id="xg{k}" x1="0" y1="0" x2="0" y2="1"><stop offset="0" stop-color="#f2502e"/><stop offset="1" stop-color="#dc2a12"/></linearGradient></defs><rect x="2" width="25" height="21" fill="#fff"/><path d="M2.1 2.9 L5.8 0 L14.6 5.4 L20.5 0 L26.8 2.9 L19.8 10.4 L26.8 17.9 L23 20.9 L14.6 15.4 L7.2 20.9 L2.1 17.9 L9.4 10.4 Z" fill="url(#xg{k})" stroke="#b81808" stroke-width="0.9" stroke-linejoin="miter"/></svg>
<div class="t" style="left:139px;top:346px;font-size:12px;color:#000;transform:scaleX(0.9600);transform-origin:0 0;">7/4/2000</div>
<div class="t" style="left:239px;top:346px;font-size:12px;color:#000;transform:scaleX(0.8969);transform-origin:0 0;">05:00:00 PM</div>
<div class="t" style="left:339px;top:346px;font-size:12px;color:#000;transform:scaleX(0.9200);transform-origin:0 0;">70</div>
<div class="t" style="left:439px;top:346px;font-size:12px;color:#000;transform:scaleX(0.9200);transform-origin:0 0;">110</div>
<div class="t" style="left:639px;top:346px;font-size:12px;color:#000;transform:scaleX(0.9200);transform-origin:0 0;">61</div>
<div style="left:35px;top:385px;width:40px;height:1px;background:#e6eef8"></div>
<div style="left:76px;top:385px;width:660px;height:1px;background:#a0a0a0"></div>
<svg style="position:absolute;left:76px;top:364px" width="29" height="21" viewBox="0 0 29 21"><rect x="2" width="25" height="21" fill="#fff"/><path d="M5.2 0.6 L16 0.6 L19.6 3.6 L19.6 17.6 L21.6 18.6 L5.6 18.6 Q1.8 10 5.2 0.6 Z" fill="#f4f5ff" stroke="#56629a" stroke-width="0.9"/><path d="M15.6 0.6 L20.2 3.9 L16.2 3.9 Z" fill="#8598e6" stroke="#5f6da6" stroke-width="0.7"/><path d="M6.2 4.5 H13.8 M5.8 7.6 H16.8 M7 14.6 H15" stroke="#5d67a0" stroke-width="1"/><path d="M6.2 11.1 H16.8" stroke="#a2abd2" stroke-width="1.5"/><path d="M11.8 20.2 L22.6 10.2" stroke="#5a3a10" stroke-width="4.8" stroke-linecap="round"/><path d="M12.2 19.8 L22 10.8" stroke="#f2a634" stroke-width="3.2"/><path d="M23 9.3 L24.4 8.1" stroke="#a85050" stroke-width="3.8" stroke-linecap="round"/><path d="M23.1 9.2 L24.3 8.2" stroke="#c87070" stroke-width="2.2" stroke-linecap="round"/><path d="M21.2 11.4 L22.2 10.4" stroke="#f4e0c0" stroke-width="2.6"/></svg>
<svg style="position:absolute;left:106px;top:364px" width="29" height="21" viewBox="0 0 29 21"><defs><linearGradient id="xg{k}" x1="0" y1="0" x2="0" y2="1"><stop offset="0" stop-color="#f2502e"/><stop offset="1" stop-color="#dc2a12"/></linearGradient></defs><rect x="2" width="25" height="21" fill="#fff"/><path d="M2.1 2.9 L5.8 0 L14.6 5.4 L20.5 0 L26.8 2.9 L19.8 10.4 L26.8 17.9 L23 20.9 L14.6 15.4 L7.2 20.9 L2.1 17.9 L9.4 10.4 Z" fill="url(#xg{k})" stroke="#b81808" stroke-width="0.9" stroke-linejoin="miter"/></svg>
<div class="t" style="left:139px;top:368px;font-size:12px;color:#000;transform:scaleX(0.9600);transform-origin:0 0;">7/3/2000</div>
<div class="t" style="left:239px;top:368px;font-size:12px;color:#000;transform:scaleX(0.8969);transform-origin:0 0;">05:00:00 PM</div>
<div class="t" style="left:339px;top:368px;font-size:12px;color:#000;transform:scaleX(0.9200);transform-origin:0 0;">90</div>
<div class="t" style="left:439px;top:368px;font-size:12px;color:#000;transform:scaleX(0.9200);transform-origin:0 0;">130</div>
<div class="t" style="left:639px;top:368px;font-size:12px;color:#000;transform:scaleX(0.9200);transform-origin:0 0;">60</div>
<div style="left:76px;top:386px;width:659px;height:21px;background:#dfdfdf"></div>
<div style="left:35px;top:407px;width:40px;height:1px;background:#e6eef8"></div>
<div style="left:76px;top:407px;width:660px;height:1px;background:#a0a0a0"></div>
<svg style="position:absolute;left:76px;top:386px" width="29" height="21" viewBox="0 0 29 21"><rect x="2" width="25" height="21" fill="#fff"/><path d="M5.2 0.6 L16 0.6 L19.6 3.6 L19.6 17.6 L21.6 18.6 L5.6 18.6 Q1.8 10 5.2 0.6 Z" fill="#f4f5ff" stroke="#56629a" stroke-width="0.9"/><path d="M15.6 0.6 L20.2 3.9 L16.2 3.9 Z" fill="#8598e6" stroke="#5f6da6" stroke-width="0.7"/><path d="M6.2 4.5 H13.8 M5.8 7.6 H16.8 M7 14.6 H15" stroke="#5d67a0" stroke-width="1"/><path d="M6.2 11.1 H16.8" stroke="#a2abd2" stroke-width="1.5"/><path d="M11.8 20.2 L22.6 10.2" stroke="#5a3a10" stroke-width="4.8" stroke-linecap="round"/><path d="M12.2 19.8 L22 10.8" stroke="#f2a634" stroke-width="3.2"/><path d="M23 9.3 L24.4 8.1" stroke="#a85050" stroke-width="3.8" stroke-linecap="round"/><path d="M23.1 9.2 L24.3 8.2" stroke="#c87070" stroke-width="2.2" stroke-linecap="round"/><path d="M21.2 11.4 L22.2 10.4" stroke="#f4e0c0" stroke-width="2.6"/></svg>
<svg style="position:absolute;left:106px;top:386px" width="29" height="21" viewBox="0 0 29 21"><defs><linearGradient id="xg{k}" x1="0" y1="0" x2="0" y2="1"><stop offset="0" stop-color="#f2502e"/><stop offset="1" stop-color="#dc2a12"/></linearGradient></defs><rect x="2" width="25" height="21" fill="#fff"/><path d="M2.1 2.9 L5.8 0 L14.6 5.4 L20.5 0 L26.8 2.9 L19.8 10.4 L26.8 17.9 L23 20.9 L14.6 15.4 L7.2 20.9 L2.1 17.9 L9.4 10.4 Z" fill="url(#xg{k})" stroke="#b81808" stroke-width="0.9" stroke-linejoin="miter"/></svg>
<div class="t" style="left:139px;top:390px;font-size:12px;color:#000;transform:scaleX(0.9600);transform-origin:0 0;">7/2/2000</div>
<div class="t" style="left:239px;top:390px;font-size:12px;color:#000;transform:scaleX(0.8969);transform-origin:0 0;">05:00:00 PM</div>
<div class="t" style="left:339px;top:390px;font-size:12px;color:#000;transform:scaleX(0.9200);transform-origin:0 0;">80</div>
<div class="t" style="left:439px;top:390px;font-size:12px;color:#000;transform:scaleX(0.9200);transform-origin:0 0;">120</div>
<div class="t" style="left:639px;top:390px;font-size:12px;color:#000;transform:scaleX(0.9200);transform-origin:0 0;">59</div>
<div style="left:35px;top:429px;width:40px;height:1px;background:#e6eef8"></div>
<div style="left:76px;top:429px;width:660px;height:1px;background:#a0a0a0"></div>
<svg style="position:absolute;left:76px;top:408px" width="29" height="21" viewBox="0 0 29 21"><rect x="2" width="25" height="21" fill="#fff"/><path d="M5.2 0.6 L16 0.6 L19.6 3.6 L19.6 17.6 L21.6 18.6 L5.6 18.6 Q1.8 10 5.2 0.6 Z" fill="#f4f5ff" stroke="#56629a" stroke-width="0.9"/><path d="M15.6 0.6 L20.2 3.9 L16.2 3.9 Z" fill="#8598e6" stroke="#5f6da6" stroke-width="0.7"/><path d="M6.2 4.5 H13.8 M5.8 7.6 H16.8 M7 14.6 H15" stroke="#5d67a0" stroke-width="1"/><path d="M6.2 11.1 H16.8" stroke="#a2abd2" stroke-width="1.5"/><path d="M11.8 20.2 L22.6 10.2" stroke="#5a3a10" stroke-width="4.8" stroke-linecap="round"/><path d="M12.2 19.8 L22 10.8" stroke="#f2a634" stroke-width="3.2"/><path d="M23 9.3 L24.4 8.1" stroke="#a85050" stroke-width="3.8" stroke-linecap="round"/><path d="M23.1 9.2 L24.3 8.2" stroke="#c87070" stroke-width="2.2" stroke-linecap="round"/><path d="M21.2 11.4 L22.2 10.4" stroke="#f4e0c0" stroke-width="2.6"/></svg>
<svg style="position:absolute;left:106px;top:408px" width="29" height="21" viewBox="0 0 29 21"><defs><linearGradient id="xg{k}" x1="0" y1="0" x2="0" y2="1"><stop offset="0" stop-color="#f2502e"/><stop offset="1" stop-color="#dc2a12"/></linearGradient></defs><rect x="2" width="25" height="21" fill="#fff"/><path d="M2.1 2.9 L5.8 0 L14.6 5.4 L20.5 0 L26.8 2.9 L19.8 10.4 L26.8 17.9 L23 20.9 L14.6 15.4 L7.2 20.9 L2.1 17.9 L9.4 10.4 Z" fill="url(#xg{k})" stroke="#b81808" stroke-width="0.9" stroke-linejoin="miter"/></svg>
<div class="t" style="left:139px;top:412px;font-size:12px;color:#000;transform:scaleX(0.9600);transform-origin:0 0;">7/1/2000</div>
<div class="t" style="left:239px;top:412px;font-size:12px;color:#000;transform:scaleX(0.8969);transform-origin:0 0;">05:00:00 PM</div>
<div class="t" style="left:339px;top:412px;font-size:12px;color:#000;transform:scaleX(0.9200);transform-origin:0 0;">70</div>
<div class="t" style="left:439px;top:412px;font-size:12px;color:#000;transform:scaleX(0.9200);transform-origin:0 0;">110</div>
<div class="t" style="left:639px;top:412px;font-size:12px;color:#000;transform:scaleX(0.9200);transform-origin:0 0;">58</div>
<div style="left:76px;top:430px;width:659px;height:21px;background:#dfdfdf"></div>
<div style="left:35px;top:451px;width:40px;height:1px;background:#e6eef8"></div>
<div style="left:76px;top:451px;width:660px;height:1px;background:#a0a0a0"></div>
<svg style="position:absolute;left:76px;top:430px" width="29" height="21" viewBox="0 0 29 21"><rect x="2" width="25" height="21" fill="#fff"/><path d="M5.2 0.6 L16 0.6 L19.6 3.6 L19.6 17.6 L21.6 18.6 L5.6 18.6 Q1.8 10 5.2 0.6 Z" fill="#f4f5ff" stroke="#56629a" stroke-width="0.9"/><path d="M15.6 0.6 L20.2 3.9 L16.2 3.9 Z" fill="#8598e6" stroke="#5f6da6" stroke-width="0.7"/><path d="M6.2 4.5 H13.8 M5.8 7.6 H16.8 M7 14.6 H15" stroke="#5d67a0" stroke-width="1"/><path d="M6.2 11.1 H16.8" stroke="#a2abd2" stroke-width="1.5"/><path d="M11.8 20.2 L22.6 10.2" stroke="#5a3a10" stroke-width="4.8" stroke-linecap="round"/><path d="M12.2 19.8 L22 10.8" stroke="#f2a634" stroke-width="3.2"/><path d="M23 9.3 L24.4 8.1" stroke="#a85050" stroke-width="3.8" stroke-linecap="round"/><path d="M23.1 9.2 L24.3 8.2" stroke="#c87070" stroke-width="2.2" stroke-linecap="round"/><path d="M21.2 11.4 L22.2 10.4" stroke="#f4e0c0" stroke-width="2.6"/></svg>
<svg style="position:absolute;left:106px;top:430px" width="29" height="21" viewBox="0 0 29 21"><defs><linearGradient id="xg{k}" x1="0" y1="0" x2="0" y2="1"><stop offset="0" stop-color="#f2502e"/><stop offset="1" stop-color="#dc2a12"/></linearGradient></defs><rect x="2" width="25" height="21" fill="#fff"/><path d="M2.1 2.9 L5.8 0 L14.6 5.4 L20.5 0 L26.8 2.9 L19.8 10.4 L26.8 17.9 L23 20.9 L14.6 15.4 L7.2 20.9 L2.1 17.9 L9.4 10.4 Z" fill="url(#xg{k})" stroke="#b81808" stroke-width="0.9" stroke-linejoin="miter"/></svg>
<div class="t" style="left:139px;top:434px;font-size:12px;color:#000;transform:scaleX(0.9600);transform-origin:0 0;">6/30/2000</div>
<div class="t" style="left:239px;top:434px;font-size:12px;color:#000;transform:scaleX(0.8969);transform-origin:0 0;">05:00:00 PM</div>
<div class="t" style="left:339px;top:434px;font-size:12px;color:#000;transform:scaleX(0.9200);transform-origin:0 0;">90</div>
<div class="t" style="left:439px;top:434px;font-size:12px;color:#000;transform:scaleX(0.9200);transform-origin:0 0;">130</div>
<div class="t" style="left:639px;top:434px;font-size:12px;color:#000;transform:scaleX(0.9200);transform-origin:0 0;">57</div>
<div style="left:35px;top:473px;width:40px;height:1px;background:#e6eef8"></div>
<div style="left:76px;top:473px;width:660px;height:1px;background:#a0a0a0"></div>
<svg style="position:absolute;left:76px;top:452px" width="29" height="21" viewBox="0 0 29 21"><rect x="2" width="25" height="21" fill="#fff"/><path d="M5.2 0.6 L16 0.6 L19.6 3.6 L19.6 17.6 L21.6 18.6 L5.6 18.6 Q1.8 10 5.2 0.6 Z" fill="#f4f5ff" stroke="#56629a" stroke-width="0.9"/><path d="M15.6 0.6 L20.2 3.9 L16.2 3.9 Z" fill="#8598e6" stroke="#5f6da6" stroke-width="0.7"/><path d="M6.2 4.5 H13.8 M5.8 7.6 H16.8 M7 14.6 H15" stroke="#5d67a0" stroke-width="1"/><path d="M6.2 11.1 H16.8" stroke="#a2abd2" stroke-width="1.5"/><path d="M11.8 20.2 L22.6 10.2" stroke="#5a3a10" stroke-width="4.8" stroke-linecap="round"/><path d="M12.2 19.8 L22 10.8" stroke="#f2a634" stroke-width="3.2"/><path d="M23 9.3 L24.4 8.1" stroke="#a85050" stroke-width="3.8" stroke-linecap="round"/><path d="M23.1 9.2 L24.3 8.2" stroke="#c87070" stroke-width="2.2" stroke-linecap="round"/><path d="M21.2 11.4 L22.2 10.4" stroke="#f4e0c0" stroke-width="2.6"/></svg>
<svg style="position:absolute;left:106px;top:452px" width="29" height="21" viewBox="0 0 29 21"><defs><linearGradient id="xg{k}" x1="0" y1="0" x2="0" y2="1"><stop offset="0" stop-color="#f2502e"/><stop offset="1" stop-color="#dc2a12"/></linearGradient></defs><rect x="2" width="25" height="21" fill="#fff"/><path d="M2.1 2.9 L5.8 0 L14.6 5.4 L20.5 0 L26.8 2.9 L19.8 10.4 L26.8 17.9 L23 20.9 L14.6 15.4 L7.2 20.9 L2.1 17.9 L9.4 10.4 Z" fill="url(#xg{k})" stroke="#b81808" stroke-width="0.9" stroke-linejoin="miter"/></svg>
<div class="t" style="left:139px;top:456px;font-size:12px;color:#000;transform:scaleX(0.9600);transform-origin:0 0;">6/29/2000</div>
<div class="t" style="left:239px;top:456px;font-size:12px;color:#000;transform:scaleX(0.8969);transform-origin:0 0;">05:00:00 PM</div>
<div class="t" style="left:339px;top:456px;font-size:12px;color:#000;transform:scaleX(0.9200);transform-origin:0 0;">80</div>
<div class="t" style="left:439px;top:456px;font-size:12px;color:#000;transform:scaleX(0.9200);transform-origin:0 0;">120</div>
<div class="t" style="left:639px;top:456px;font-size:12px;color:#000;transform:scaleX(0.9200);transform-origin:0 0;">56</div>
<div style="left:76px;top:474px;width:659px;height:21px;background:#dfdfdf"></div>
<div style="left:35px;top:495px;width:40px;height:1px;background:#e6eef8"></div>
<div style="left:76px;top:495px;width:660px;height:1px;background:#a0a0a0"></div>
<svg style="position:absolute;left:76px;top:474px" width="29" height="21" viewBox="0 0 29 21"><rect x="2" width="25" height="21" fill="#fff"/><path d="M5.2 0.6 L16 0.6 L19.6 3.6 L19.6 17.6 L21.6 18.6 L5.6 18.6 Q1.8 10 5.2 0.6 Z" fill="#f4f5ff" stroke="#56629a" stroke-width="0.9"/><path d="M15.6 0.6 L20.2 3.9 L16.2 3.9 Z" fill="#8598e6" stroke="#5f6da6" stroke-width="0.7"/><path d="M6.2 4.5 H13.8 M5.8 7.6 H16.8 M7 14.6 H15" stroke="#5d67a0" stroke-width="1"/><path d="M6.2 11.1 H16.8" stroke="#a2abd2" stroke-width="1.5"/><path d="M11.8 20.2 L22.6 10.2" stroke="#5a3a10" stroke-width="4.8" stroke-linecap="round"/><path d="M12.2 19.8 L22 10.8" stroke="#f2a634" stroke-width="3.2"/><path d="M23 9.3 L24.4 8.1" stroke="#a85050" stroke-width="3.8" stroke-linecap="round"/><path d="M23.1 9.2 L24.3 8.2" stroke="#c87070" stroke-width="2.2" stroke-linecap="round"/><path d="M21.2 11.4 L22.2 10.4" stroke="#f4e0c0" stroke-width="2.6"/></svg>
<svg style="position:absolute;left:106px;top:474px" width="29" height="21" viewBox="0 0 29 21"><defs><linearGradient id="xg{k}" x1="0" y1="0" x2="0" y2="1"><stop offset="0" stop-color="#f2502e"/><stop offset="1" stop-color="#dc2a12"/></linearGradient></defs><rect x="2" width="25" height="21" fill="#fff"/><path d="M2.1 2.9 L5.8 0 L14.6 5.4 L20.5 0 L26.8 2.9 L19.8 10.4 L26.8 17.9 L23 20.9 L14.6 15.4 L7.2 20.9 L2.1 17.9 L9.4 10.4 Z" fill="url(#xg{k})" stroke="#b81808" stroke-width="0.9" stroke-linejoin="miter"/></svg>
<div class="t" style="left:139px;top:478px;font-size:12px;color:#000;transform:scaleX(0.9600);transform-origin:0 0;">6/28/2000</div>
<div class="t" style="left:239px;top:478px;font-size:12px;color:#000;transform:scaleX(0.8969);transform-origin:0 0;">05:00:00 PM</div>
<div class="t" style="left:339px;top:478px;font-size:12px;color:#000;transform:scaleX(0.9200);transform-origin:0 0;">70</div>
<div class="t" style="left:439px;top:478px;font-size:12px;color:#000;transform:scaleX(0.9200);transform-origin:0 0;">110</div>
<div class="t" style="left:639px;top:478px;font-size:12px;color:#000;transform:scaleX(0.9200);transform-origin:0 0;">55</div>
<div style="left:35px;top:517px;width:40px;height:1px;background:#e6eef8"></div>
<div style="left:76px;top:517px;width:660px;height:1px;background:#a0a0a0"></div>
<svg style="position:absolute;left:76px;top:496px" width="29" height="21" viewBox="0 0 29 21"><rect x="2" width="25" height="21" fill="#fff"/><path d="M5.2 0.6 L16 0.6 L19.6 3.6 L19.6 17.6 L21.6 18.6 L5.6 18.6 Q1.8 10 5.2 0.6 Z" fill="#f4f5ff" stroke="#56629a" stroke-width="0.9"/><path d="M15.6 0.6 L20.2 3.9 L16.2 3.9 Z" fill="#8598e6" stroke="#5f6da6" stroke-width="0.7"/><path d="M6.2 4.5 H13.8 M5.8 7.6 H16.8 M7 14.6 H15" stroke="#5d67a0" stroke-width="1"/><path d="M6.2 11.1 H16.8" stroke="#a2abd2" stroke-width="1.5"/><path d="M11.8 20.2 L22.6 10.2" stroke="#5a3a10" stroke-width="4.8" stroke-linecap="round"/><path d="M12.2 19.8 L22 10.8" stroke="#f2a634" stroke-width="3.2"/><path d="M23 9.3 L24.4 8.1" stroke="#a85050" stroke-width="3.8" stroke-linecap="round"/><path d="M23.1 9.2 L24.3 8.2" stroke="#c87070" stroke-width="2.2" stroke-linecap="round"/><path d="M21.2 11.4 L22.2 10.4" stroke="#f4e0c0" stroke-width="2.6"/></svg>
<svg style="position:absolute;left:106px;top:496px" width="29" height="21" viewBox="0 0 29 21"><defs><linearGradient id="xg{k}" x1="0" y1="0" x2="0" y2="1"><stop offset="0" stop-color="#f2502e"/><stop offset="1" stop-color="#dc2a12"/></linearGradient></defs><rect x="2" width="25" height="21" fill="#fff"/><path d="M2.1 2.9 L5.8 0 L14.6 5.4 L20.5 0 L26.8 2.9 L19.8 10.4 L26.8 17.9 L23 20.9 L14.6 15.4 L7.2 20.9 L2.1 17.9 L9.4 10.4 Z" fill="url(#xg{k})" stroke="#b81808" stroke-width="0.9" stroke-linejoin="miter"/></svg>
<div class="t" style="left:139px;top:500px;font-size:12px;color:#000;transform:scaleX(0.9600);transform-origin:0 0;">6/27/2000</div>
<div class="t" style="left:239px;top:500px;font-size:12px;color:#000;transform:scaleX(0.8969);transform-origin:0 0;">05:00:00 PM</div>
<div class="t" style="left:339px;top:500px;font-size:12px;color:#000;transform:scaleX(0.9200);transform-origin:0 0;">90</div>
<div class="t" style="left:439px;top:500px;font-size:12px;color:#000;transform:scaleX(0.9200);transform-origin:0 0;">130</div>
<div class="t" style="left:639px;top:500px;font-size:12px;color:#000;transform:scaleX(0.9200);transform-origin:0 0;">54</div>
<div style="left:76px;top:518px;width:659px;height:21px;background:#dfdfdf"></div>
<div style="left:35px;top:539px;width:40px;height:1px;background:#e6eef8"></div>
<div style="left:76px;top:539px;width:660px;height:1px;background:#a0a0a0"></div>
<svg style="position:absolute;left:76px;top:518px" width="29" height="21" viewBox="0 0 29 21"><rect x="2" width="25" height="21" fill="#fff"/><path d="M5.2 0.6 L16 0.6 L19.6 3.6 L19.6 17.6 L21.6 18.6 L5.6 18.6 Q1.8 10 5.2 0.6 Z" fill="#f4f5ff" stroke="#56629a" stroke-width="0.9"/><path d="M15.6 0.6 L20.2 3.9 L16.2 3.9 Z" fill="#8598e6" stroke="#5f6da6" stroke-width="0.7"/><path d="M6.2 4.5 H13.8 M5.8 7.6 H16.8 M7 14.6 H15" stroke="#5d67a0" stroke-width="1"/><path d="M6.2 11.1 H16.8" stroke="#a2abd2" stroke-width="1.5"/><path d="M11.8 20.2 L22.6 10.2" stroke="#5a3a10" stroke-width="4.8" stroke-linecap="round"/><path d="M12.2 19.8 L22 10.8" stroke="#f2a634" stroke-width="3.2"/><path d="M23 9.3 L24.4 8.1" stroke="#a85050" stroke-width="3.8" stroke-linecap="round"/><path d="M23.1 9.2 L24.3 8.2" stroke="#c87070" stroke-width="2.2" stroke-linecap="round"/><path d="M21.2 11.4 L22.2 10.4" stroke="#f4e0c0" stroke-width="2.6"/></svg>
<svg style="position:absolute;left:106px;top:518px" width="29" height="21" viewBox="0 0 29 21"><defs><linearGradient id="xg{k}" x1="0" y1="0" x2="0" y2="1"><stop offset="0" stop-color="#f2502e"/><stop offset="1" stop-color="#dc2a12"/></linearGradient></defs><rect x="2" width="25" height="21" fill="#fff"/><path d="M2.1 2.9 L5.8 0 L14.6 5.4 L20.5 0 L26.8 2.9 L19.8 10.4 L26.8 17.9 L23 20.9 L14.6 15.4 L7.2 20.9 L2.1 17.9 L9.4 10.4 Z" fill="url(#xg{k})" stroke="#b81808" stroke-width="0.9" stroke-linejoin="miter"/></svg>
<div class="t" style="left:139px;top:522px;font-size:12px;color:#000;transform:scaleX(0.9600);transform-origin:0 0;">6/26/2000</div>
<div class="t" style="left:239px;top:522px;font-size:12px;color:#000;transform:scaleX(0.8969);transform-origin:0 0;">05:00:00 PM</div>
<div class="t" style="left:339px;top:522px;font-size:12px;color:#000;transform:scaleX(0.9200);transform-origin:0 0;">80</div>
<div class="t" style="left:439px;top:522px;font-size:12px;color:#000;transform:scaleX(0.9200);transform-origin:0 0;">120</div>
<div class="t" style="left:639px;top:522px;font-size:12px;color:#000;transform:scaleX(0.9200);transform-origin:0 0;">53</div>
<div style="left:35px;top:561px;width:40px;height:1px;background:#e6eef8"></div>
<div style="left:76px;top:561px;width:660px;height:1px;background:#a0a0a0"></div>
<svg style="position:absolute;left:76px;top:540px" width="29" height="21" viewBox="0 0 29 21"><rect x="2" width="25" height="21" fill="#fff"/><path d="M5.2 0.6 L16 0.6 L19.6 3.6 L19.6 17.6 L21.6 18.6 L5.6 18.6 Q1.8 10 5.2 0.6 Z" fill="#f4f5ff" stroke="#56629a" stroke-width="0.9"/><path d="M15.6 0.6 L20.2 3.9 L16.2 3.9 Z" fill="#8598e6" stroke="#5f6da6" stroke-width="0.7"/><path d="M6.2 4.5 H13.8 M5.8 7.6 H16.8 M7 14.6 H15" stroke="#5d67a0" stroke-width="1"/><path d="M6.2 11.1 H16.8" stroke="#a2abd2" stroke-width="1.5"/><path d="M11.8 20.2 L22.6 10.2" stroke="#5a3a10" stroke-width="4.8" stroke-linecap="round"/><path d="M12.2 19.8 L22 10.8" stroke="#f2a634" stroke-width="3.2"/><path d="M23 9.3 L24.4 8.1" stroke="#a85050" stroke-width="3.8" stroke-linecap="round"/><path d="M23.1 9.2 L24.3 8.2" stroke="#c87070" stroke-width="2.2" stroke-linecap="round"/><path d="M21.2 11.4 L22.2 10.4" stroke="#f4e0c0" stroke-width="2.6"/></svg>
<svg style="position:absolute;left:106px;top:540px" width="29" height="21" viewBox="0 0 29 21"><defs><linearGradient id="xg{k}" x1="0" y1="0" x2="0" y2="1"><stop offset="0" stop-color="#f2502e"/><stop offset="1" stop-color="#dc2a12"/></linearGradient></defs><rect x="2" width="25" height="21" fill="#fff"/><path d="M2.1 2.9 L5.8 0 L14.6 5.4 L20.5 0 L26.8 2.9 L19.8 10.4 L26.8 17.9 L23 20.9 L14.6 15.4 L7.2 20.9 L2.1 17.9 L9.4 10.4 Z" fill="url(#xg{k})" stroke="#b81808" stroke-width="0.9" stroke-linejoin="miter"/></svg>
<div class="t" style="left:139px;top:544px;font-size:12px;color:#000;transform:scaleX(0.9600);transform-origin:0 0;">6/25/2000</div>
<div class="t" style="left:239px;top:544px;font-size:12px;color:#000;transform:scaleX(0.8969);transform-origin:0 0;">05:00:00 PM</div>
<div class="t" style="left:339px;top:544px;font-size:12px;color:#000;transform:scaleX(0.9200);transform-origin:0 0;">70</div>
<div class="t" style="left:439px;top:544px;font-size:12px;color:#000;transform:scaleX(0.9200);transform-origin:0 0;">110</div>
<div class="t" style="left:639px;top:544px;font-size:12px;color:#000;transform:scaleX(0.9200);transform-origin:0 0;">52</div>
<div style="left:76px;top:562px;width:659px;height:21px;background:#dfdfdf"></div>
<div style="left:35px;top:583px;width:40px;height:1px;background:#e6eef8"></div>
<div style="left:76px;top:583px;width:660px;height:1px;background:#a0a0a0"></div>
<svg style="position:absolute;left:76px;top:562px" width="29" height="21" viewBox="0 0 29 21"><rect x="2" width="25" height="21" fill="#fff"/><path d="M5.2 0.6 L16 0.6 L19.6 3.6 L19.6 17.6 L21.6 18.6 L5.6 18.6 Q1.8 10 5.2 0.6 Z" fill="#f4f5ff" stroke="#56629a" stroke-width="0.9"/><path d="M15.6 0.6 L20.2 3.9 L16.2 3.9 Z" fill="#8598e6" stroke="#5f6da6" stroke-width="0.7"/><path d="M6.2 4.5 H13.8 M5.8 7.6 H16.8 M7 14.6 H15" stroke="#5d67a0" stroke-width="1"/><path d="M6.2 11.1 H16.8" stroke="#a2abd2" stroke-width="1.5"/><path d="M11.8 20.2 L22.6 10.2" stroke="#5a3a10" stroke-width="4.8" stroke-linecap="round"/><path d="M12.2 19.8 L22 10.8" stroke="#f2a634" stroke-width="3.2"/><path d="M23 9.3 L24.4 8.1" stroke="#a85050" stroke-width="3.8" stroke-linecap="round"/><path d="M23.1 9.2 L24.3 8.2" stroke="#c87070" stroke-width="2.2" stroke-linecap="round"/><path d="M21.2 11.4 L22.2 10.4" stroke="#f4e0c0" stroke-width="2.6"/></svg>
<svg style="position:absolute;left:106px;top:562px" width="29" height="21" viewBox="0 0 29 21"><defs><linearGradient id="xg{k}" x1="0" y1="0" x2="0" y2="1"><stop offset="0" stop-color="#f2502e"/><stop offset="1" stop-color="#dc2a12"/></linearGradient></defs><rect x="2" width="25" height="21" fill="#fff"/><path d="M2.1 2.9 L5.8 0 L14.6 5.4 L20.5 0 L26.8 2.9 L19.8 10.4 L26.8 17.9 L23 20.9 L14.6 15.4 L7.2 20.9 L2.1 17.9 L9.4 10.4 Z" fill="url(#xg{k})" stroke="#b81808" stroke-width="0.9" stroke-linejoin="miter"/></svg>
<div class="t" style="left:139px;top:566px;font-size:12px;color:#000;transform:scaleX(0.9600);transform-origin:0 0;">6/24/2000</div>
<div class="t" style="left:239px;top:566px;font-size:12px;color:#000;transform:scaleX(0.8969);transform-origin:0 0;">05:00:00 PM</div>
<div class="t" style="left:339px;top:566px;font-size:12px;color:#000;transform:scaleX(0.9200);transform-origin:0 0;">90</div>
<div class="t" style="left:439px;top:566px;font-size:12px;color:#000;transform:scaleX(0.9200);transform-origin:0 0;">130</div>
<div class="t" style="left:639px;top:566px;font-size:12px;color:#000;transform:scaleX(0.9200);transform-origin:0 0;">51</div>
<div style="left:35px;top:605px;width:40px;height:1px;background:#e6eef8"></div>
<div style="left:76px;top:605px;width:660px;height:1px;background:#a0a0a0"></div>
<svg style="position:absolute;left:76px;top:584px" width="29" height="21" viewBox="0 0 29 21"><rect x="2" width="25" height="21" fill="#fff"/><path d="M5.2 0.6 L16 0.6 L19.6 3.6 L19.6 17.6 L21.6 18.6 L5.6 18.6 Q1.8 10 5.2 0.6 Z" fill="#f4f5ff" stroke="#56629a" stroke-width="0.9"/><path d="M15.6 0.6 L20.2 3.9 L16.2 3.9 Z" fill="#8598e6" stroke="#5f6da6" stroke-width="0.7"/><path d="M6.2 4.5 H13.8 M5.8 7.6 H16.8 M7 14.6 H15" stroke="#5d67a0" stroke-width="1"/><path d="M6.2 11.1 H16.8" stroke="#a2abd2" stroke-width="1.5"/><path d="M11.8 20.2 L22.6 10.2" stroke="#5a3a10" stroke-width="4.8" stroke-linecap="round"/><path d="M12.2 19.8 L22 10.8" stroke="#f2a634" stroke-width="3.2"/><path d="M23 9.3 L24.4 8.1" stroke="#a85050" stroke-width="3.8" stroke-linecap="round"/><path d="M23.1 9.2 L24.3 8.2" stroke="#c87070" stroke-width="2.2" stroke-linecap="round"/><path d="M21.2 11.4 L22.2 10.4" stroke="#f4e0c0" stroke-width="2.6"/></svg>
<svg style="position:absolute;left:106px;top:584px" width="29" height="21" viewBox="0 0 29 21"><defs><linearGradient id="xg{k}" x1="0" y1="0" x2="0" y2="1"><stop offset="0" stop-color="#f2502e"/><stop offset="1" stop-color="#dc2a12"/></linearGradient></defs><rect x="2" width="25" height="21" fill="#fff"/><path d="M2.1 2.9 L5.8 0 L14.6 5.4 L20.5 0 L26.8 2.9 L19.8 10.4 L26.8 17.9 L23 20.9 L14.6 15.4 L7.2 20.9 L2.1 17.9 L9.4 10.4 Z" fill="url(#xg{k})" stroke="#b81808" stroke-width="0.9" stroke-linejoin="miter"/></svg>
<div class="t" style="left:139px;top:588px;font-size:12px;color:#000;transform:scaleX(0.9600);transform-origin:0 0;">6/23/2000</div>
<div class="t" style="left:239px;top:588px;font-size:12px;color:#000;transform:scaleX(0.8969);transform-origin:0 0;">05:00:00 PM</div>
<div class="t" style="left:339px;top:588px;font-size:12px;color:#000;transform:scaleX(0.9200);transform-origin:0 0;">80</div>
<div class="t" style="left:439px;top:588px;font-size:12px;color:#000;transform:scaleX(0.9200);transform-origin:0 0;">120</div>
<div class="t" style="left:639px;top:588px;font-size:12px;color:#000;transform:scaleX(0.9200);transform-origin:0 0;">50</div>
<div style="left:75px;top:145px;width:1px;height:461px;background:#a0a0a0"></div>
<div style="left:105px;top:165px;width:1px;height:441px;background:#a0a0a0"></div>
<div style="left:135px;top:165px;width:1px;height:441px;background:#a0a0a0"></div>
<div style="left:235px;top:165px;width:1px;height:441px;background:#a0a0a0"></div>
<div style="left:335px;top:165px;width:1px;height:441px;background:#a0a0a0"></div>
<div style="left:435px;top:165px;width:1px;height:441px;background:#a0a0a0"></div>
<div style="left:535px;top:165px;width:1px;height:441px;background:#a0a0a0"></div>
<div style="left:635px;top:165px;width:1px;height:441px;background:#a0a0a0"></div>
<div style="left:735px;top:165px;width:1px;height:441px;background:#a0a0a0"></div>
<svg style="position:absolute;left:42px;top:304px" width="6" height="11" viewBox="0 0 6 11"><path d="M0 0.6 L5.2 5.1 L0 9.8 Z" fill="#000"/></svg>
</div>
<div style="left:101px;top:298px;font-family:&quot;Liberation Serif&quot;,serif;font-weight:bold;font-size:20px;line-height:24px;color:rgba(255,255,255,0.22);text-shadow:0 0 1px rgba(0,0,0,0.3);letter-spacing:0.3px;white-space:nowrap">SOFTPEDIA</div>
<div style="left:222px;top:297px;font-family:&quot;Liberation Sans&quot;,sans-serif;font-size:7px;line-height:10px;color:rgba(255,255,255,0.4);text-shadow:0 0 1px rgba(0,0,0,0.15)">TM</div>
<div style="left:126px;top:329px;font-family:&quot;Liberation Sans&quot;,sans-serif;font-size:9px;line-height:12px;color:rgba(255,255,255,0.3);text-shadow:0 0 1px rgba(0,0,0,0.15);white-space:nowrap">www.softpedia.com</div>
</body></html>
